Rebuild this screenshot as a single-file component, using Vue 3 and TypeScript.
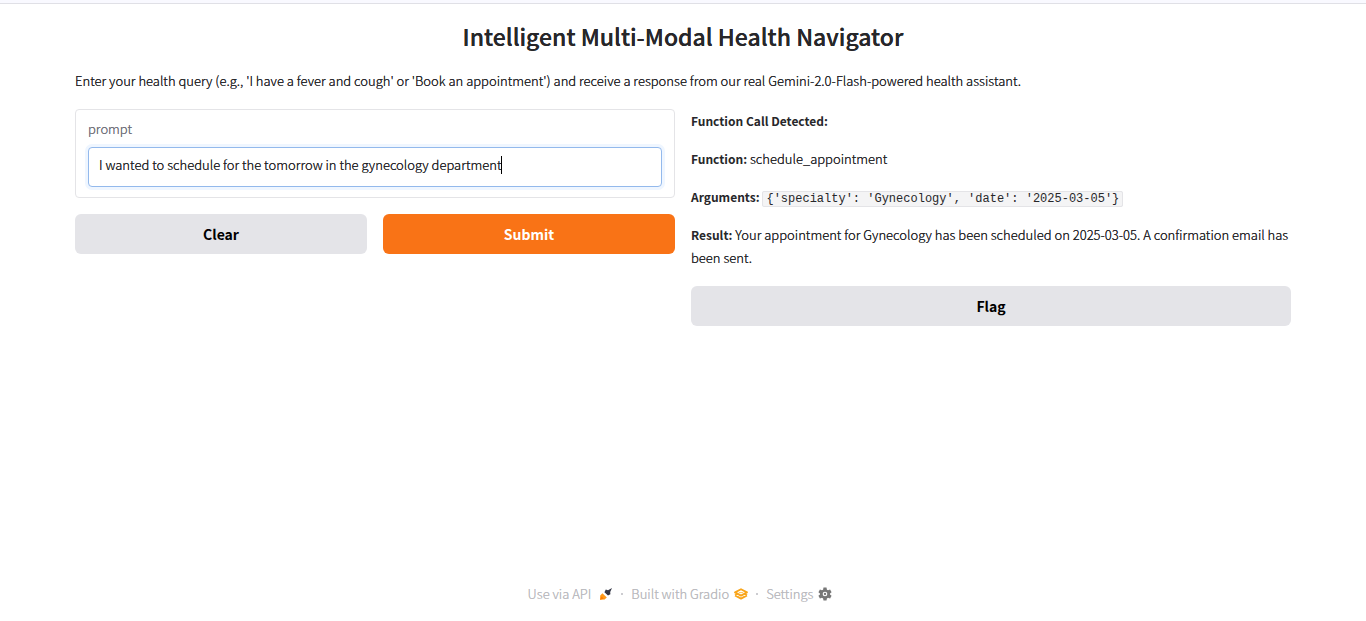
<script setup lang="ts">
import { nextTick, onMounted, ref } from 'vue'

const initial = 'I wanted to schedule for the tomorrow in the gynecology department'
const prompt = ref(initial)
const field = ref<HTMLInputElement | null>(null)
const caretLeft = ref(0)
const flagged = ref(false)

function placeCaret(): void {
  const el = field.value
  const ctx = document.createElement('canvas').getContext('2d')
  if (!el || !ctx) return
  const style = getComputedStyle(el)
  ctx.font = `${style.fontWeight} ${style.fontSize} ${style.fontFamily}`
  const at = el.selectionStart ?? prompt.value.length
  const inset = parseFloat(style.paddingLeft) + parseFloat(style.borderLeftWidth)
  caretLeft.value = Math.floor(inset + ctx.measureText(prompt.value.slice(0, at)).width)
}

function clearPrompt(): void {
  prompt.value = ''
  field.value?.focus()
  nextTick(placeCaret)
}

onMounted(() => {
  const el = field.value
  if (!el) return
  el.focus()
  el.setSelectionRange(el.value.length, el.value.length)
  placeCaret()
})
</script>

<template>
  <div class="page">
    <div class="topline"></div>
    <main class="content">
      <h1>Intelligent Multi-Modal Health Navigator</h1>
      <p class="intro">Enter your health query (e.g., 'I have a fever and cough' or 'Book an appointment') and receive a response from our real Gemini-2.0-Flash-powered health assistant.</p>
      <div class="columns">
        <form class="column" @submit.prevent>
          <div class="block">
            <label for="prompt">prompt</label>
            <div class="field">
              <input id="prompt" ref="field" v-model="prompt" type="text" autocomplete="off" spellcheck="false" @input="placeCaret" @keyup="placeCaret" @click="placeCaret" />
              <span class="caret" :style="{ left: caretLeft + 'px' }"></span>
            </div>
          </div>
          <div class="buttons">
            <button type="button" class="secondary" @click="clearPrompt">Clear</button>
            <button type="submit" class="primary">Submit</button>
          </div>
        </form>
        <section class="column">
          <div class="result">
            <p><strong>Function Call Detected:</strong></p>
            <p><strong>Function:</strong> schedule_appointment</p>
            <p><strong>Arguments:</strong> <code>{'specialty': 'Gynecology', 'date': '2025-03-05'}</code></p>
            <p><strong>Result:</strong> Your appointment for Gynecology has been scheduled on 2025-03-05. A confirmation email has been sent.</p>
          </div>
          <button type="button" class="secondary" :aria-pressed="flagged" @click="flagged = !flagged">Flag</button>
        </section>
      </div>
    </main>
    <footer>
      <a href="#api" class="api">Use via API
        <svg width="14" height="14" viewBox="0 0 14 14" aria-hidden="true">
          <path d="M1 12.8 1.2 8.6 3.4 6.2 7.8 10.4 5.6 12.6Z" fill="#ff9a1a" />
          <path d="M1 12.8 2.6 9.6 4.8 11.6Z" fill="#ff7a00" />
          <path d="M5.4 5.2 6.8 2.6 9 3.2 13 1 11.2 5 11.4 7.2 9 8.6Z" fill="#343746" />
        </svg>
      </a>
      <span class="dot"></span>
      <a href="#gradio">Built with Gradio
        <svg width="14" height="14" viewBox="0 0 14 14" fill="none" aria-hidden="true">
          <path d="M1 5.4 7 2.2 13 5.4 7 8.6Z" stroke="#f9a51a" stroke-width="1.8" stroke-linejoin="round" />
          <path d="M1 8.4 7 11.6 13 8.4M1 8.4 3.6 7M13 8.4 10.4 7" stroke="#f9a51a" stroke-width="1.8" stroke-linejoin="round" />
          <path d="M4.8 5.6H9.2" stroke="#ffc45c" stroke-width="1" />
        </svg>
      </a>
      <span class="dot"></span>
      <a href="#settings">Settings
        <svg width="14" height="14" viewBox="0 0 24 24" aria-hidden="true">
          <path fill="#777" fill-rule="evenodd" d="M9.4 1h5.2l.7 3.5 1.9 1.1 3.5-1.2 2.6 4.5-2.7 2.3v1.6l2.7 2.3-2.6 4.5-3.5-1.2-1.9 1.1-.7 3.5H9.4l-.7-3.5-1.9-1.1-3.5 1.2L.7 15.1l2.7-2.3v-1.6L.7 8.9l2.6-4.5 3.5 1.2 1.9-1.1ZM12 8a4 4 0 1 0 0 8 4 4 0 0 0 0-8Z" />
          <circle cx="12" cy="12" r="2" fill="#777" />
        </svg>
      </a>
    </footer>
  </div>
</template>

<style>
body {
  margin: 0;
  background: #fff;
}
</style>

<style scoped>
.page {
  display: flex;
  flex-direction: column;
  min-height: 100vh;
  font-family: "Noto Sans CJK SC", "Open Sans", sans-serif;
  font-size: 13px;
  font-weight: 300;
  line-height: 23px;
  color: #27272a;
  text-shadow: 0 0 0 currentColor;
}
.topline {
  height: 3px;
  background: #f9f9ff;
  border-bottom: 1px solid #e0e0e6;
}
.content {
  flex: 1;
  padding: 15px 75px 0;
}
h1 {
  margin: 0 0 16px;
  font-size: 23px;
  line-height: 34px;
  font-weight: 500;
  text-align: center;
}
p {
  margin: 0;
}
.intro {
  margin-bottom: 17px;
}
.columns {
  display: grid;
  grid-template-columns: 1fr 1fr;
  gap: 16px;
}
.column {
  display: flex;
  flex-direction: column;
  gap: 16px;
  min-width: 0;
}
.block {
  padding: 7px 12px 10px;
  border: 1px solid #e4e4e7;
  border-radius: 4px;
}
label {
  display: block;
  margin-bottom: 7px;
  color: #71717a;
}
.field {
  position: relative;
}
input {
  display: block;
  box-sizing: border-box;
  width: 100%;
  height: 40px;
  padding: 0 10px 5px;
  border: 1px solid #93b9ec;
  border-radius: 4px;
  outline: none;
  box-shadow: 0 0 0 3px #eff6ff;
  background: #fff;
  color: #27272a;
  font: inherit;
  text-shadow: inherit;
  caret-color: transparent;
}
.caret {
  position: absolute;
  top: 9px;
  width: 1px;
  height: 18px;
  background: #000;
  visibility: hidden;
  pointer-events: none;
}
input:focus + .caret {
  visibility: visible;
}
.buttons {
  display: grid;
  grid-template-columns: 1fr 1fr;
  gap: 16px;
}
button {
  height: 40px;
  padding: 0 16px;
  border: 0;
  border-radius: 6px;
  font-family: inherit;
  font-size: 14px;
  line-height: 24px;
  font-weight: 700;
  cursor: pointer;
}
.secondary {
  background: #e4e4e8;
  color: #000;
}
.primary {
  background: #f97316;
  color: #fff;
}
.result {
  display: flex;
  flex-direction: column;
  gap: 15px;
  padding-bottom: 1px;
}
strong {
  font-size: 12px;
  font-weight: 700;
  text-shadow: none;
}
code {
  padding: 0 3px;
  border: 1px solid #e4e4e7;
  border-radius: 2px;
  background: #f4f4f5;
  font-family: "Liberation Mono", monospace;
  font-size: 12px;
  line-height: 1;
  text-shadow: none;
}
footer {
  display: flex;
  justify-content: center;
  align-items: center;
  gap: 8px;
  padding: 16px 22px 16px 16px;
  color: #bbbbc0;
}
footer a {
  display: flex;
  align-items: center;
  gap: 5px;
  color: inherit;
  text-decoration: none;
}
footer .api {
  gap: 8px;
}
.dot {
  width: 2px;
  height: 2px;
  border-radius: 50%;
  background: #bbbbc0;
}
</style>
